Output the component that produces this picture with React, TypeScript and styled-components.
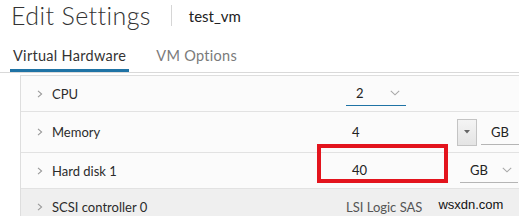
import styled, { createGlobalStyle } from "styled-components";

const GlobalStyle = createGlobalStyle`
  html, body {
    margin: 0;
    padding: 0;
    background: #ffffff;
    overflow: hidden;
  }
  body {
    font-family: Lato, "Open Sans", "Liberation Sans", sans-serif;
    color: #333333;
  }
`;

interface RowData {
  id: string;
  label: string;
  height: number;
  shaded?: boolean;
}

const rows: RowData[] = [
  { id: "cpu", label: "CPU", height: 36 },
  { id: "memory", label: "Memory", height: 41 },
  { id: "disk", label: "Hard disk 1", height: 36 },
  { id: "scsi", label: "SCSI controller 0", height: 36, shaded: true },
];

const ChevronRight = () => (
  <svg width="6" height="8" viewBox="0 0 6 8">
    <path d="M1 0.8 L4.6 4 L1 7.2" fill="none" stroke="#9a9a9a" strokeWidth="1.1" />
  </svg>
);

const ChevronDown = () => (
  <svg width="10" height="6" viewBox="0 0 10 6">
    <path d="M0.8 0.8 L5 4.8 L9.2 0.8" fill="none" stroke="#a8a8a8" strokeWidth="1.1" />
  </svg>
);

const renderValue = (id: string) => {
  if (id === "cpu") {
    return (
      <Select $width={60} $active>
        <span>2</span>
        <ChevronDown />
      </Select>
    );
  }
  if (id === "memory") {
    return (
      <ValueGroup>
        <Input $width={100}>4</Input>
        <SpinButton>
          <svg width="6" height="4" viewBox="0 0 6 4">
            <path d="M0 0 L6 0 L3 3.5 Z" fill="#666666" />
          </svg>
        </SpinButton>
        <Unit $width={40}>GB</Unit>
      </ValueGroup>
    );
  }
  if (id === "disk") {
    return (
      <ValueGroup>
        <Highlight>
          <Input $width={100}>40</Input>
          <RedBox />
        </Highlight>
        <Select $width={58} $left={14}>
          <span>GB</span>
          <ChevronDown />
        </Select>
      </ValueGroup>
    );
  }
  return (
    <ValueGroup>
      <Muted>LSI Logic SAS</Muted>
      <Watermark>wsxdn.com</Watermark>
    </ValueGroup>
  );
};

const App = () => {
  return (
    <Page>
      <GlobalStyle />
      <Header>
        <Title>Edit Settings</Title>
        <Divider />
        <VmName>test_vm</VmName>
      </Header>
      <Tabs>
        <Tab $active>Virtual Hardware</Tab>
        <Tab>VM Options</Tab>
      </Tabs>
      <Table>
        {rows.map((r) => (
          <Row key={r.id} $height={r.height} $shaded={r.shaded}>
            <Toggle>
              <ChevronRight />
            </Toggle>
            <Label>{r.label}</Label>
            <Value>{renderValue(r.id)}</Value>
          </Row>
        ))}
      </Table>
    </Page>
  );
};

export default App;

const Page = styled.div`
  width: 519px;
  height: 216px;
  overflow: hidden;
`;

const Header = styled.div`
  display: flex;
  align-items: center;
  height: 31px;
  padding-left: 11px;
`;

const Title = styled.h1`
  margin: 0;
  font-size: 25px;
  font-weight: 300;
  color: #333333;
  letter-spacing: 0.4px;
  line-height: 1;
`;

const Divider = styled.div`
  width: 1px;
  height: 21px;
  background: #d6d6d6;
  margin: 0 17px 0 20px;
`;

const VmName = styled.span`
  font-size: 15px;
  color: #222222;
`;

const Tabs = styled.div`
  display: flex;
  gap: 24px;
  margin-top: 11px;
  padding-left: 10px;
  border-bottom: 1px solid #d9d9d9;
`;

const Tab = styled.div<{ $active?: boolean }>`
  font-size: 14.5px;
  letter-spacing: 0.3px;
  padding: 5px 3px 5px 3px;
  color: ${(p) => (p.$active ? "#333333" : "#7a7a7a")};
  border-bottom: 3px solid ${(p) => (p.$active ? "#1f73a5" : "transparent")};
`;

const Table = styled.div`
  margin: 2px 0 0 20px;
  border-top: 1px solid #dedede;
  border-left: 1px solid #dedede;
  background: #fbfbfb;
`;

const Row = styled.div<{ $height: number; $shaded?: boolean }>`
  display: grid;
  grid-template-columns: 15px 294px 1fr;
  align-items: center;
  height: ${(p) => p.$height - 1}px;
  padding-left: 16px;
  border-bottom: 1px solid #e2e2e2;
  background: ${(p) => (p.$shaded ? "#efefef" : "#fbfbfb")};
`;

const Toggle = styled.div`
  display: flex;
  align-items: center;
`;

const Label = styled.div`
  font-size: 13px;
  color: #2b2b2b;
`;

const Value = styled.div`
  display: flex;
  align-items: center;
  height: 100%;
`;

const ValueGroup = styled.div`
  display: flex;
  align-items: center;
`;

const Select = styled.div<{ $width: number; $active?: boolean; $left?: number }>`
  display: flex;
  align-items: center;
  justify-content: space-between;
  box-sizing: border-box;
  width: ${(p) => p.$width}px;
  margin-left: ${(p) => p.$left ?? 0}px;
  padding: 4px 6px 4px 10px;
  font-size: 13px;
  color: #222222;
  border-bottom: 1px solid ${(p) => (p.$active ? "#1f73a5" : "#b5b5b5")};
`;

const Input = styled.div<{ $width: number }>`
  box-sizing: border-box;
  width: ${(p) => p.$width}px;
  padding: 4px 6px;
  font-size: 13px;
  color: #222222;
  border-bottom: 1px solid #b5b5b5;
`;

const SpinButton = styled.div`
  display: flex;
  align-items: center;
  justify-content: center;
  box-sizing: border-box;
  width: 20px;
  height: 27px;
  margin-left: 11px;
  background: linear-gradient(#f4f4f4, #e4e4e4);
  border: 1px solid #c4c4c4;
`;

const Unit = styled.div<{ $width: number }>`
  box-sizing: border-box;
  width: ${(p) => p.$width}px;
  margin-left: 4px;
  padding: 4px 10px;
  font-size: 13px;
  color: #222222;
  border-bottom: 1px solid #b5b5b5;
`;

const Highlight = styled.div`
  position: relative;
`;

const RedBox = styled.div`
  position: absolute;
  left: -29px;
  top: -14px;
  width: 131px;
  height: 39px;
  box-sizing: border-box;
  border: 4px solid #e3141d;
`;

const Muted = styled.span`
  font-size: 13px;
  color: #555555;
`;

const Watermark = styled.span`
  font-family: "Liberation Sans", Arial, sans-serif;
  font-size: 13px;
  color: #111111;
  margin-left: 16px;
  margin-top: -4px;
`;
